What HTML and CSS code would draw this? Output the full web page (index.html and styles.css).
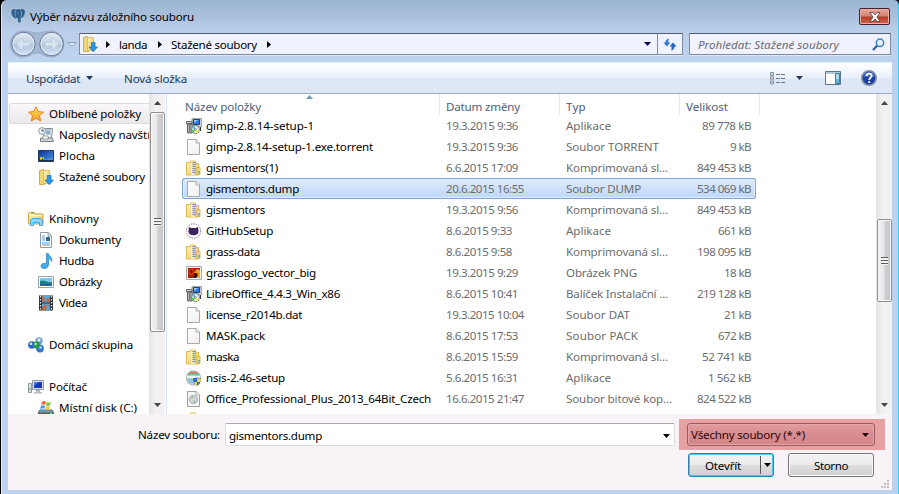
FILE: index.html
```html
<!DOCTYPE html>
<html lang="cs">
<head>
<meta charset="utf-8">
<title>Výběr názvu záložního souboru</title>
<link rel="stylesheet" href="styles.css">
</head>
<body>
<svg class="defs" width="0" height="0" aria-hidden="true">
  <defs>
    <linearGradient id="gold" x2="1" y2="1"><stop offset="0" stop-color="#fdf2bd"/><stop offset="1" stop-color="#ebc75f"/></linearGradient>
    <linearGradient id="blue" y2="1" x2="1"><stop offset="0" stop-color="#0a2c96"/><stop offset="1" stop-color="#4d9ce8"/></linearGradient>
    <linearGradient id="paper" x2="1" y2="1"><stop offset="0" stop-color="#fff"/><stop offset="1" stop-color="#f0eeee"/></linearGradient>
    <linearGradient id="star" x2="0" y2="1"><stop offset="0" stop-color="#ffe45c"/><stop offset="1" stop-color="#f79a22"/></linearGradient>
    <linearGradient id="orb" x2="0" y2="1"><stop offset="0" stop-color="#e3ebf5"/><stop offset=".48" stop-color="#c3d1e3"/><stop offset=".52" stop-color="#b0c3da"/><stop offset="1" stop-color="#d5e5f6"/></linearGradient>
  </defs>
  <symbol id="i-file" viewBox="0 0 16 16"><path d="M1.500.5h8.700l3.300 3.300v11.700h-12z" fill="url(#paper)" stroke="#a9a9a9"/><path d="M10 .8v3.200h3.200" fill="#fff" stroke="#aaa"/></symbol>
  <symbol id="i-zip" viewBox="0 0 16 16"><path d="M.5 2.500h4V1h5v2.500h3V15H.5z" fill="url(#gold)" stroke="#dfb850"/><path d="M5 1.500h4V15H5z" fill="#fdf0b6"/><path d="M11 7.500h3v7h-3z" fill="#f9e290" stroke="#d3a63a" stroke-width=".8"/><path d="M8 2v12" stroke="#56678a" stroke-width="3" stroke-dasharray="1 1"/><path d="M8 2v12" stroke="#b9c4d6"/><path d="M13 11v2.500" stroke="#4aa5e0" stroke-width="1.500"/></symbol>
  <symbol id="i-setup" viewBox="0 0 16 16"><path d="M6 1l2-1h8v8l-2 2H6z" fill="#c8ccd0" stroke="#777" stroke-width=".8"/><path d="M7.500 1.500h6v5h-6z" fill="#2b7bea" stroke="#246"/><path d="M8 2h4L8 5z" fill="#8cc7ff"/><path d="M.5 3.500h5.500v2H.5zM1.500 6h1.700v9H1.500zM4 6h2v9H4z" fill="#d7d7d7" stroke="#444" stroke-width=".8"/><circle cx="9.500" cy="11.500" r="4" fill="#eff8ee" stroke="#555" stroke-width=".8"/><path d="M9.500 11.500L6 10a4 4 0 0 1 2.500-2.200z" fill="#40c8f0"/><path d="M9.500 11.500l1 3.500a4 4 0 0 0 2.500-2z" fill="#ff4"/><path d="M9.500 11.500l-2 3.200A4 4 0 0 1 5.800 12z" fill="#4c4"/><circle cx="9.500" cy="11.500" r="1" fill="#fff" stroke="#333" stroke-width=".5"/><path d="M14.500 9v4" stroke="#333"/></symbol>
  <symbol id="i-git" viewBox="0 0 16 16"><circle cx="7.500" cy="8" r="7.200" fill="#fff" stroke="#69518c" stroke-dasharray="1.200 1.200"/><path d="M3 4l2.300 1h4.400L12 4l.6 4c0 3-2 4.300-5.100 4.300S2.400 11 2.400 8z" fill="#3d2460"/></symbol>
  <symbol id="i-image" viewBox="0 0 16 16"><path d="M.5 1.500h15v13H.5z" fill="#f7f1e8" stroke="#aaa"/><path d="M2 3h12v10H2z" fill="#9c260b"/><path d="M3 4h5v4L7 10H3z" fill="#d23410"/><path d="M4 5h2l1 2-2 2z" fill="#7d1208"/><path d="M8 8l3-4 3 1v8H8z" fill="#e9a42c"/><path d="M8 8h3l1 2-2 3H8z" fill="#3a1208"/></symbol>
  <symbol id="i-nsis" viewBox="0 0 16 16"><circle cx="7.500" cy="8" r="7.300" fill="#b5cfc8" stroke="#87a9a0" stroke-width=".5"/><path d="M1 5a7.300 7.300 0 0 1 13 0z" fill="#78b89e"/><path d="M4 2h7v2H4z" fill="#d98068"/><path d="M1 6h13v2H1z" fill="#e9f5f8"/><path d="M2 9h9v4H3z" fill="#8dc2da"/><path d="M7 8.500l4-1 4 1c0 4-1.500 6-4 7.200C8.500 14.500 7 12 7 8.500z" fill="#2b69c8"/><path d="M11 8v4h3.300c.5-1 .7-2 .7-3zM8 12h3v3.500C10 15 8.500 13.500 8 12z" fill="#f7d244"/></symbol>
  <symbol id="i-iso" viewBox="0 0 16 16"><path d="M1.500.5h8.700l3.300 3.300v11.700h-12z" fill="#f5f5f5" stroke="#a0a0a0"/><path d="M10 .8v3.200h3.200" fill="#fff" stroke="#aaa"/><circle cx="7.500" cy="8.500" r="4.200" fill="#d0d6d5" stroke="#999" stroke-width=".7"/><path d="M7.500 8.500L4.500 6a4 4 0 0 1 3-1.500zM7.500 8.500l3 2.500a4 4 0 0 1-3 1.500z" fill="#a3c0aa"/><circle cx="7.500" cy="8.500" r="1.300" fill="#fff" stroke="#999" stroke-width=".5"/></symbol>
  <symbol id="i-star" viewBox="0 0 16 16"><path d="M8 .8l2.200 4.800 5.200.6-3.900 3.500 1.200 5.300L8 12.300 3.300 15l1.200-5.300L.6 6.200l5.200-.6z" fill="url(#star)" stroke="#dd7c1b" stroke-width=".9"/></symbol>
  <symbol id="i-recent" viewBox="0 0 16 16"><path d="M5.500 1.500h9l-1 9.500H6z" fill="#eef2f5" stroke="#848d96"/><path d="M8 3h5M8 5h4.500M8 7h4.500" stroke="#879dad"/><path d="M8 4h4v3H8z" fill="#86aec8"/><path d="M2.500 11h12l1 3.500H2.500z" fill="#d0d4d8" stroke="#7b838b"/><path d="M5 9h5v3H5z" fill="#fff" stroke="#888" stroke-width=".7"/><circle cx="4" cy="4" r="3.400" fill="#e9f2fa" stroke="#8e9ba8"/><path d="M4 2v2h2" fill="none" stroke="#466"/></symbol>
  <symbol id="i-desktop" viewBox="0 0 16 16"><path d="M.5 2.500h15v11H.5z" fill="url(#blue)" stroke="#233a60"/><path d="M1 11h14v2H1z" fill="#20304a"/><path d="M5 11h10v1H5z" fill="#5e91c8"/><path d="M2 9h2v2H2z" fill="#f6b62c"/><path d="M4 9h2v2H4z" fill="#78c941"/><path d="M2 11h2v1H2z" fill="#5fb4f6"/></symbol>
  <symbol id="i-down" viewBox="0 0 16 16"><path d="M1.500 1.500l4-1V3h1v12.500h-5z" fill="#f3d678" stroke="#d3ab4b"/><path d="M5.500 1.500h6v13h-6z" fill="url(#gold)" stroke="#e2be5c"/><path d="M9.500 6.500h3.500V11h2.500L11.300 15.700 7 11h2.500z" fill="#2998e8" stroke="#166eb5" stroke-width=".7"/></symbol>
  <symbol id="i-library" viewBox="0 0 16 16"><path d="M.5 13V2.500l1-1h5l1 1.500H15v10z" fill="url(#gold)" stroke="#cfa642"/><path d="M2 4.500h12" stroke="#fff8cf"/><path d="M3 2h3" stroke="#55b34b"/><path d="M2.500 14.500V9l2-1.500h8l2 1.500v5.500h-3v-3h-6v3z" fill="#91d4f4" stroke="#3a93c5" stroke-width=".8"/></symbol>
  <symbol id="i-doc" viewBox="0 0 16 16"><path d="M2.500.5h8l3 3v12h-11z" fill="#fff" stroke="#8e9aa5"/><path d="M4 4h3M4 6h3M4 8h3M4 11h8M4 13h8" stroke="#5a9acd"/><path d="M8 5h4v4H8z" fill="#36648d"/><path d="M10 .8V4h3" fill="#dfeaf2" stroke="#8e9aa5"/></symbol>
  <symbol id="i-music" viewBox="0 0 16 16"><path d="M8.500.5h1.800c.3 2.500 4.500 3.500 3.300 8-.8-2-1.300-2.800-3.100-3v6c0 2.400-1.800 4-4.200 4-2 0-3.300-1-3.300-2.500 0-2 2.500-3.300 5.500-2.500z" fill="#42aceb" stroke="#1c7dc4" stroke-width=".7"/></symbol>
  <symbol id="i-picture" viewBox="0 0 16 16"><path d="M.5 2.500h15v11H.5z" fill="#fff" stroke="#98a2aa"/><path d="M2 4h12v8H2z" fill="#7cc7ef"/><path d="M2 7c4-2 7 2 12 1v4H2z" fill="#2d7a72"/><path d="M2 10c4 1 8-1 12 0v2H2z" fill="#2166a6"/></symbol>
  <symbol id="i-video" viewBox="0 0 16 16"><path d="M1 .5h14v15H1z" fill="#252d38"/><path d="M2.500 1v14M13.500 1v14" stroke="#e8edf1" stroke-width="1.300" stroke-dasharray="1.500 1.500"/><path d="M4 1h8v6.500H4zM4 8.500h8V15H4z" fill="#4caadd"/><path d="M4 1l3 2-1 4H4zM9 3h3v4H8zM4 12l3-3 2 2-1 4H4zM10 10l2-1v4z" fill="#c16a49"/></symbol>
  <symbol id="i-group" viewBox="0 0 16 16"><circle cx="3.800" cy="8" r="3.700" fill="#2866c4"/><circle cx="11" cy="4" r="3.700" fill="#75a5c9"/><circle cx="12" cy="11.500" r="3.900" fill="#3676c9"/><circle cx="8.500" cy="8" r="3.400" fill="#1f9b46"/><circle cx="7.600" cy="7" r="1.300" fill="#a6efac"/><circle cx="3" cy="6.700" r="1.300" fill="#d9ecff"/><circle cx="11" cy="3" r="1.500" fill="#e3f5ff"/><circle cx="12.500" cy="10.500" r="1.200" fill="#c0e0ff"/></symbol>
  <symbol id="i-computer" viewBox="0 0 16 16"><path d="M.5 4.500h3v9h-3z" fill="#dadfe3" stroke="#8e969d"/><path d="M1 10h2" stroke="#49b956"/><path d="M4.500 1.500h11v9h-11z" fill="#dde1e5" stroke="#92989e"/><path d="M6 3h8v6H6z" fill="#1537bb"/><path d="M6 3h5L6 7z" fill="#4d77e2"/><path d="M8 11h4v2h2v1.500H6V13h2z" fill="#b4bbc2"/></symbol>
  <symbol id="i-drive" viewBox="0 0 16 16"><path d="M2 10h12l1.500 2v4H.5v-4z" fill="#8499a8" stroke="#586c78"/><path d="M1 12.500h14V15H1z" fill="#3c6573"/><path d="M12 13h2v1h-2z" fill="#6f6"/><path d="M4 2c2-1.500 3-1 4 0L7 5c-1-1-2-1-4 0z" fill="#ee6431"/><path d="M8.500 2c2 1 3 .8 4.500 0l-1 3.500c-1.500.5-2.500.5-4 0z" fill="#7cc34a"/><path d="M3 6c2-1 3-1 4 0L6 9c-1-1-2-1-4 0z" fill="#3c9ee0"/><path d="M7.500 6c2 1 3 .8 4.500 0l-1 3.500c-1.500.5-2.500.5-4 0z" fill="#f8c633"/></symbol>
  <symbol id="i-arrow" viewBox="0 0 7 4"><path d="M0 0h7L3.500 4z" fill="currentColor"/></symbol>
  <symbol id="i-next" viewBox="0 0 4 7"><path d="M0 0l4 3.500L0 7z" fill="currentColor"/></symbol>
</svg>

<div class="window">
  <header class="titlebar">
    <svg class="app-icon" viewBox="0 0 16 16"><path d="M1 3C1.500.5 4.500.3 6 1.200c1.500-.7 3-.7 4 0 2-1 5-.5 5.300 2 .2 2.800-1.300 5.300-2.800 7l-1.500-.2v3.500c0 1.800-2.800 2-3.200.2L7.500 10c-1 1-2.800 1-3.300 0C2 9 .5 5.500 1 3z" fill="#2f5e8c" stroke="#c4d6e6" stroke-width=".6"/><path d="M5.800 2C4.800 4 5 7 5.500 8.500M10.500 2.500c1.500 2 1.200 4 .3 6.500M7.300 5h1.200" fill="none" stroke="#a9c4dc" stroke-width=".6"/></svg>
    <span class="title" data-w="164">Výběr názvu záložního souboru</span>
    <button class="close" aria-label="Zavřít"><svg width="12" height="10" viewBox="0 0 12 10"><path d="M1 .5h3L6 3l2-2.500h3L8 5l3 4.500H8L6 7 4 9.500H1L4 5z" fill="#fff" stroke="#5d3038" stroke-width=".8"/></svg></button>
  </header>

  <nav class="navbar">
    <svg class="travel" width="69" height="28" viewBox="0 0 69 28">
      <path d="M14 1c7 0 8 2 14 2S35 1 42 1c17 0 17 26 0 26-7 0-8-4-14-4s-7 4-14 4C-3 27-3 1 14 1z" fill="#a3b8d2" stroke="#95abc8"/>
      <circle cx="14.500" cy="14" r="11.700" fill="url(#orb)" stroke="#66778e"/><circle cx="42.500" cy="14" r="11.700" fill="url(#orb)" stroke="#66778e"/>
      <circle cx="14.500" cy="14" r="10.500" fill="none" stroke="#e3edf8"/><circle cx="42.500" cy="14" r="10.500" fill="none" stroke="#e3edf8"/>
      <path d="M7 14l7-6.500v4.500h7v4h-7v4.500zM50 14l-7-6.500v4.500h-7v4h7v4.500z" fill="#d9e4f1" stroke="#b3c3d8" stroke-width=".6"/>
      <path d="M59 12.500h8l-4 4z" fill="#dce8f6" stroke="#8da2bd" stroke-width=".9"/>
    </svg>
    <div class="address">
      <svg class="icon"><use href="#i-down"/></svg>
      <svg class="next"><use href="#i-next"/></svg>
      <span data-w="28">landa</span>
      <svg class="next"><use href="#i-next"/></svg>
      <span data-w="86">Stažené soubory</span>
      <svg class="next"><use href="#i-next"/></svg>
      <svg class="arrow"><use href="#i-arrow"/></svg>
    </div>
    <div class="refresh"><svg width="14" height="13" viewBox="0 0 14 13"><path d="M6 .5C3.500 1 2.500 2.500 2.500 4.500H.3L4 8.500l3.500-4H5.500C5.300 3 5.300 2 6 .5z" fill="#3579cb"/><path d="M8 12.500c2.500-.5 3.500-2 3.500-4h2.200L10 4.500l-3.500 4h2C8.700 10 8.700 11 8 12.500z" fill="#2866b6"/></svg></div>
    <div class="search"><span data-w="141">Prohledat: Stažené soubory</span><svg width="13" height="13" viewBox="0 0 13 13"><path d="M1 12l4-4.200" stroke="#2c59aa" stroke-width="2.200"/><circle cx="8" cy="4.800" r="3.700" fill="#e3f0ff" stroke="#3c7dc8" stroke-width="1.500"/></svg></div>
  </nav>

  <div class="toolbar">
    <span data-w="54">Uspořádat</span>
    <svg class="arrow"><use href="#i-arrow"/></svg>
    <span class="new-folder" data-w="63">Nová složka</span>
    <svg class="views" width="16" height="13" viewBox="0 0 16 13"><path d="M.5.5h3v3h-3zM.5 4.800h3v3h-3zM.5 9h3v3h-3z" fill="#fff" stroke="#8793a0"/><path d="M1.500 1.500h1v1h-1zM1.500 10h1v1h-1z" fill="#3b78a8"/><path d="M1.500 5.800h1v1h-1z" fill="#d23c34"/><path d="M6 2.500h4M11 2.500h4M6 6.500h4M11 6.500h4M6 10.500h4M11 10.500h4" stroke="#66788d"/></svg>
    <svg class="arrow views-arrow"><use href="#i-arrow"/></svg>
    <svg class="pane" width="16" height="14" viewBox="0 0 16 14"><path d="M.5.5h15v13H.5z" fill="#fff" stroke="#58778f"/><path d="M1 1h14v2H1z" fill="#b4c9d6"/><path d="M10.500 2.500h4v10h-4z" fill="#62bce0" stroke="#447d9c"/><path d="M11 3h3v5h-3z" fill="#a5e0f2"/></svg>
    <svg class="help" width="16" height="16" viewBox="0 0 16 16"><circle cx="8" cy="8" r="7.200" fill="#203fa3" stroke="#8a93a5" stroke-width="1.600"/><path d="M2.500 7a5.500 5 0 0 1 11 0z" fill="#4468c6"/><path d="M5.500 6c0-3.300 5.200-3 5.200-.3C10.700 7.500 8.200 7.700 8.200 10" fill="none" stroke="#fff" stroke-width="1.800"/><path d="M7.200 11.200h2V13h-2z" fill="#fff"/></svg>
  </div>

  <main class="content">
    <aside class="tree">
      <ul id="tree"></ul>
      <div class="scrollbar"><svg class="up"><use href="#i-arrow"/></svg><div class="thumb tree-thumb"><i></i></div><svg class="down"><use href="#i-arrow"/></svg></div>
    </aside>
    <section class="files">
      <div class="list">
        <div class="head">
          <span class="c-name"><b data-w="76">Název položky</b><svg class="sort" width="7" height="4" viewBox="0 0 7 4"><path d="M0 4h7L3.500 0z" fill="#6d9cc0"/></svg></span>
          <span class="c-date"><b data-w="74">Datum změny</b></span>
          <span class="c-type"><b data-w="20">Typ</b></span>
          <span class="c-size"><b data-w="42">Velikost</b></span>
        </div>
        <div id="rows"></div>
      </div>
      <div class="scrollbar"><svg class="up"><use href="#i-arrow"/></svg><div class="thumb files-thumb"><i></i></div><svg class="down"><use href="#i-arrow"/></svg></div>
    </section>
  </main>

  <footer class="footer">
    <div class="name-line">
      <label><span data-w="82">Název souboru:</span></label>
      <div class="name-box"><span data-w="93">gismentors.dump</span><svg class="arrow"><use href="#i-arrow"/></svg></div>
      <div class="marked"><div class="filter"><span data-w="114">Všechny soubory (*.*)</span><svg class="arrow"><use href="#i-arrow"/></svg></div></div>
    </div>
    <div class="actions">
      <div class="btn open"><span class="cap"><span data-w="36">Otevřít</span></span><span class="split"><svg class="arrow"><use href="#i-arrow"/></svg></span></div>
      <div class="btn"><span data-w="34">Storno</span></div>
    </div>
    <svg class="grip" width="9" height="9" viewBox="0 0 9 9"><path d="M6 0h2v2H6zM3 3h2v2H3zM6 3h2v2H6zM0 6h2v2H0zM3 6h2v2H3zM6 6h2v2H6z" fill="#c3c0c5"/></svg>
  </footer>
</div>
<script src="app.js"></script>
</body>
</html>
```
FILE: styles.css
```css
* { box-sizing: border-box; }
body {
  margin: 0;
  width: 899px;
  height: 494px;
  overflow: hidden;
  background: #000;
  font: 11.6px/21px "Noto Sans", "Open Sans", sans-serif;
  color: #000;
}
svg { display: block; flex: none; }
.defs { position: absolute; }
[data-w] { white-space: pre; flex: none; display: inline-block; }
.icon { width: 16px; height: 16px; }
.arrow { width: 7px; height: 4px; }
.next { width: 4px; height: 7px; }

.window {
  width: 898px;
  height: 494px;
  margin-left: 1px;
  padding: 0 4px 4px 6px;
  border-right: 1px solid #27d3f2;
  border-left: 1px solid #dce9f8;
  border-radius: 6px 5px 0 0;
  background: linear-gradient(#9bb5d2 0, #a9c0dc 16px, #bacee9 30px, #bcd2ef 60px);
  display: flex;
  flex-direction: column;
}

.titlebar { height: 30px; display: flex; align-items: flex-start; padding: 0 1px 0 2px; }
.app-icon { width: 16px; height: 16px; margin-top: 8px; }
.title { margin: 6px auto 0 4px; }
.close {
  width: 31px; height: 17px; margin: 8px 3px 0 0; padding: 0;
  border: 1px solid #46202b; border-radius: 2px;
  background: linear-gradient(#e6a99c, #d58070 48%, #b83c26 52%, #cf6550);
  box-shadow: inset 0 0 0 1px #e9b2a6;
  display: flex; align-items: center; justify-content: center;
}

.navbar { height: 32px; display: flex; }
.travel { margin-left: 1px; }
.address, .refresh, .search {
  height: 22px; margin-top: 3px;
  border: 1px solid #7e8da2; border-top-color: #56616f;
  background: #f0f3ff;
  display: flex; align-items: center;
  box-shadow: 0 1px 0 #dbe7f6;
}
.address { width: 579px; margin-left: 1px; padding: 0 6px 0 2px; }
.address .next:nth-of-type(2) { margin: 0 9px 0 8px; }
.address .next:nth-of-type(3) { margin: 0 9px 0 11px; }
.address .next:nth-of-type(4) { margin: 0 auto 0 10px; }
.address .arrow { color: #000050; }
.refresh { width: 26px; margin-left: -1px; justify-content: center; }
.search { width: 202px; margin-left: 6px; padding: 0 5px 0 8px; justify-content: space-between; font-style: italic; color: #6b6b73; }

.toolbar {
  height: 32px; width: 884px; padding-left: 18px;
  background: linear-gradient(#fff 0, #f7faff 6px, #e8effb 15px, #dce6f5 16px, #dde7f7 100%);
  border-top: 1px solid #e9f1fc; border-bottom: 1px solid #9caac4;
  display: flex; align-items: center; color: #1e395b;
}
.toolbar > .arrow:nth-of-type(1) { margin-left: 6px; }
.new-folder { margin-left: 31px; }
.views { margin-left: auto; }
.views-arrow { margin-left: 10px; }
.pane { margin-left: 22px; }
.help { margin: 0 15px 0 20px; }

.content { height: 320px; width: 884px; display: flex; background: #fff; overflow: hidden; }
.tree { width: 158px; display: flex; border-right: 1px solid #fff; }
.tree ul { width: 141px; height: 320px; margin: 0; padding: 9px 0 0; list-style: none; overflow: hidden; }
.tree li { height: 21px; display: flex; align-items: center; gap: 5px; padding-left: 20px; }
.tree li.sub { padding-left: 30px; gap: 5px; }
.tree li.on { margin-left: 1px; border: 1px solid #ddd9dd; border-right: 0; border-radius: 3px 0 0 3px; background: linear-gradient(#faf8fa, #ebe7eb); padding-left: 18px; }

.scrollbar {
  width: 16px; height: 320px; flex: none;
  background: linear-gradient(90deg, #e6e3e6, #f3f0f3 40%, #f4f1f4);
  display: flex; flex-direction: column; align-items: center; color: #444;
}
.scrollbar svg { width: 7px; height: 4px; }
.scrollbar .up { margin-top: 7px; transform: rotate(180deg); }
.scrollbar .down { margin: auto 0 7px; }
.thumb {
  width: 15px; border: 1px solid #8f8f93; border-radius: 2px;
  background: linear-gradient(90deg, #f4f4f5, #e6e6e8 45%, #cfcfd3 55%, #c4c4c9);
  box-shadow: inset 0 0 0 1px #f8f8f8;
  display: flex; align-items: center; justify-content: center;
}
.thumb i { width: 7px; height: 8px; background: repeating-linear-gradient(#5c5c60 0 1px, #f4f4f4 1px 3px); }
.tree-thumb { height: 220px; margin-top: 7px; }
.files-thumb { height: 83px; margin-top: 114px; }

.files { flex: 1; display: flex; justify-content: space-between; border-left: 1px solid #d8e7f5; }
.list { width: 593px; height: 320px; overflow: hidden; padding-left: 15px; }
.head { height: 21px; display: flex; color: #4c607a; }
.head > span { height: 21px; line-height: 25px; border-right: 1px solid #dfeaf6; position: relative; }
.head b { font-weight: normal; }
.head .c-name { width: 258px; padding-left: 3px; }
.head .c-date, .head .c-type { width: 120px; padding-left: 6px; }
.head .c-size { width: 80px; padding-left: 6px; }
.sort { position: absolute; left: 124px; top: 1px; }
.row {
  width: 574px; height: 21px; padding-left: 4px;
  display: grid; grid-template-columns: 20px 240px 120px 110px 75px; align-items: center;
  color: #6d6d6d;
}
.row .name { color: #000; }
.row .size { justify-self: end; }
.row.selected {
  border-radius: 3px;
  background: linear-gradient(#e0ecfc, #bdd6fa);
  box-shadow: inset 0 0 0 1px #7aa3d6, inset 0 0 0 2px #e3effe;
}

.footer { height: 76px; width: 884px; background: #f7f3f7; position: relative; }
.name-line { display: flex; height: 36px; padding-top: 5px; }
label { width: 217px; padding: 5px 5px 0 0; text-align: right; }
.name-box, .filter {
  height: 23px; display: flex; align-items: center; justify-content: space-between;
  border: 1px solid #dcdae0; border-top-color: #a8a8b0; background: #fff; border-radius: 2px;
}
.name-box { width: 450px; margin: 4px 4px 0 0; padding: 2px 4px 0 3px; }
.marked { width: 206px; height: 31px; padding: 4px 10px 0 8px; background: #e8a1a3; }
.filter { border-color: #925e63; background: linear-gradient(#e29b9d, #d98d90 50%, #d28487); padding: 0 5px 0 3px; color: #2b080b; border-radius: 3px; box-shadow: inset 0 0 0 1px #e8a5a7; }
.actions { display: flex; gap: 14px; padding: 3px 0 0 680px; }
.btn {
  width: 86px; height: 24px; border: 1px solid #747478; border-radius: 3px;
  background: linear-gradient(#f4f3f4, #ecebec 48%, #dddddd 52%, #d0d0d0);
  box-shadow: inset 0 0 0 1px #fafafa;
  display: flex; align-items: center; justify-content: center;
}
.btn.open { border-color: #347fa6; box-shadow: inset 0 0 0 1px #49c8f2; }
.cap { flex: 1; text-align: center; padding-right: 3px; height: 21px; }
.split { width: 13px; height: 18px; border-left: 1px solid #55555a; display: flex; align-items: center; justify-content: center; }
.grip { position: absolute; right: 2px; bottom: 1px; }
```
FILE: app.js
```js
const tree = [
  ["star", "Oblíbené položky", 92, "on"],
  ["recent", "Naposledy navští", 91, "sub"],
  ["desktop", "Plocha", 36, "sub"],
  ["down", "Stažené soubory", 86, "sub"],
  null,
  ["library", "Knihovny", 50, ""],
  ["doc", "Dokumenty", 62, "sub"],
  ["music", "Hudba", 35, "sub"],
  ["picture", "Obrázky", 43, "sub"],
  ["video", "Videa", 28, "sub"],
  null,
  ["group", "Domácí skupina", 84, ""],
  null,
  ["computer", "Počítač", 38, ""],
  ["drive", "Místní disk (C:)", 78, "sub"]
];

const files = [
  ["setup", "gimp-2.8.14-setup-1", 108, "19.3.2015 9:36", "Aplikace", 45, "89 778 kB", 49],
  ["file", "gimp-2.8.14-setup-1.exe.torrent", 167, "19.3.2015 9:36", "Soubor TORRENT", 93, "9 kB", 21],
  ["zip", "gismentors(1)", 72, "6.6.2015 17:09", "Komprimovaná sl...", 102, "849 453 kB", 54],
  ["file", "gismentors.dump", 93, "20.6.2015 16:55", "Soubor DUMP", 75, "534 069 kB", 54],
  ["zip", "gismentors", 59, "19.3.2015 9:56", "Komprimovaná sl...", 102, "849 453 kB", 54],
  ["git", "GitHubSetup", 67, "8.6.2015 9:33", "Aplikace", 45, "661 kB", 33],
  ["zip", "grass-data", 54, "8.6.2015 9:58", "Komprimovaná sl...", 102, "198 095 kB", 54],
  ["image", "grasslogo_vector_big", 110, "19.3.2015 9:29", "Obrázek PNG", 71, "18 kB", 27],
  ["setup", "LibreOffice_4.4.3_Win_x86", 134, "8.6.2015 10:41", "Balíček Instalační ...", 102, "219 128 kB", 54],
  ["file", "license_r2014b.dat", 96, "19.3.2015 10:04", "Soubor DAT", 64, "21 kB", 27],
  ["file", "MASK.pack", 59, "8.6.2015 17:53", "Soubor PACK", 72, "672 kB", 33],
  ["zip", "maska", 33, "8.6.2015 15:59", "Komprimovaná sl...", 102, "52 741 kB", 49],
  ["nsis", "nsis-2.46-setup", 79, "5.6.2015 16:31", "Aplikace", 45, "1 562 kB", 43],
  ["iso", "Office_Professional_Plus_2013_64Bit_Czech", 225, "16.6.2015 21:47", "Soubor bitové kop...", 106, "824 522 kB", 54],
  ["zip", "", 0, "", "", 0, "", 0]
];

const icon = id => `<svg class="icon"><use href="#i-${id}"/></svg>`;
const text = (s, w, cls = "") => `<span class="${cls}"${w ? ` data-w="${w}"` : ""}>${s}</span>`;

document.getElementById("tree").innerHTML = tree
  .map(t => t ? `<li class="${t[3]}">${icon(t[0])}${text(t[1], t[2])}</li>` : "<li></li>")
  .join("");

document.getElementById("rows").innerHTML = files
  .map(([ic, name, nw, date, type, tw, size, sw], i) =>
    `<div class="row${i === 3 ? " selected" : ""}">${icon(ic)}` +
    `<div>${text(name, nw, "name")}</div><div>${text(date, date && date.length * 6 - 12)}</div>` +
    `<div>${text(type, tw)}</div><div class="size">${text(size, sw)}</div></div>`)
  .join("");

for (const el of document.querySelectorAll("[data-w]")) {
  const target = Number(el.dataset.w);
  const width = el.getBoundingClientRect().width;
  el.style.letterSpacing = (target - width) / el.textContent.length + "px";
}
```
